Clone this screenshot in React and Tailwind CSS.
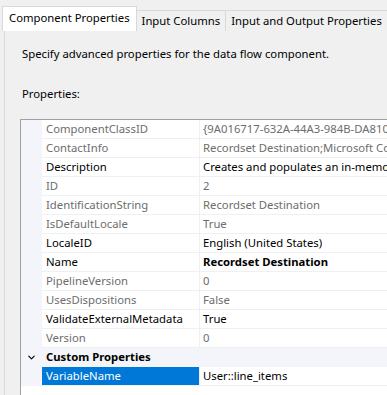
import React from 'react';
import { ChevronDown } from 'lucide-react';

const rows = [
  { name: 'ComponentClassID', value: '{9A016717-632A-44A3-984B-DA810B2E5C34}', ro: true },
  { name: 'ContactInfo', value: 'Recordset Destination;Microsoft Corporation', ro: true },
  { name: 'Description', value: 'Creates and populates an in-memory ADO recordset', ro: false },
  { name: 'ID', value: '2', ro: true },
  { name: 'IdentificationString', value: 'Recordset Destination', ro: true },
  { name: 'IsDefaultLocale', value: 'True', ro: true },
  { name: 'LocaleID', value: 'English (United States)', ro: false },
  { name: 'Name', value: 'Recordset Destination', ro: false, bold: true },
  { name: 'PipelineVersion', value: '0', ro: true },
  { name: 'UsesDispositions', value: 'False', ro: true },
  { name: 'ValidateExternalMetadata', value: 'True', ro: false },
  { name: 'Version', value: '0', ro: true },
];

const Row = ({ name, value, ro, bold }) => (
  <div className="flex h-[19px] leading-[18px]">
    <div className="w-[21px] shrink-0 bg-[#f3f5fa]" />
    <div className={`w-[158px] shrink-0 pl-[4px] bg-white border-b border-r border-[#f0f0f0] whitespace-nowrap overflow-hidden ${ro ? 'text-[#6d6d6d]' : 'text-black'}`}>
      {name}
    </div>
    <div className={`flex-1 pl-[3px] bg-white border-b border-[#f0f0f0] whitespace-nowrap overflow-hidden ${ro ? 'text-[#6d6d6d]' : 'text-black'} ${bold ? 'font-bold' : ''}`}>
      {value}
    </div>
  </div>
);

export default function App() {
  return (
    <div className="w-[387px] h-[395px] overflow-hidden bg-[#f0f0f0] text-[11.3px] text-black" style={{ fontFamily: '"Noto Sans", "Open Sans", sans-serif' }}>
      <div className="flex items-end h-[31px] pl-[2px]">
        <div className="relative z-10 h-[25px] px-[6px] bg-white border border-b-0 border-[#d9d9d9] leading-[22px] whitespace-nowrap">
          Component Properties
        </div>
        <div className="h-[21px] px-[5px] bg-[#f0f0f0] border-t border-r border-[#d9d9d9] leading-[20px] whitespace-nowrap">
          Input Columns
        </div>
        <div className="h-[21px] px-[5px] bg-[#f0f0f0] border-t border-r border-[#d9d9d9] leading-[20px] whitespace-nowrap">
          Input and Output Properties
        </div>
      </div>
      <div className="ml-[4px] -mt-px h-[400px] border-l border-t border-[#d9d9d9] bg-[#f0f0f0]">
        <div className="pl-[17px] pt-[15px] leading-[16px]">Specify advanced properties for the data flow component.</div>
        <div className="pl-[17px] pt-[24px] leading-[16px]">Properties:</div>
        <div className="ml-[15px] mt-[17px] w-[420px] h-[277px] border border-[#a0a0a0] bg-white">
          {rows.map((r) => (
            <Row key={r.name} {...r} />
          ))}
          <div className="flex items-center h-[19px] bg-[#f3f5fa] font-bold">
            <div className="w-[21px] flex justify-center">
              <ChevronDown size={11} strokeWidth={2.5} />
            </div>
            <div className="pl-[4px]">Custom Properties</div>
          </div>
          <div className="flex h-[19px] leading-[18px]">
            <div className="w-[21px] shrink-0 bg-[#f3f5fa]" />
            <div className="w-[158px] shrink-0 pl-[4px] bg-[#0078d7] text-white border-b border-r border-[#f0f0f0]">VariableName</div>
            <div className="flex-1 pl-[3px] bg-white border-b border-[#f0f0f0]">User::line_items</div>
          </div>
        </div>
      </div>
    </div>
  );
}
